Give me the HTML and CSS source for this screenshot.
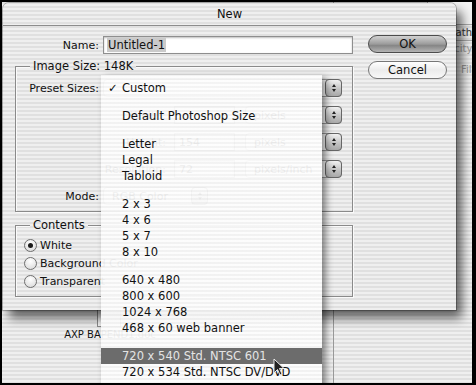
FILE: index.html
```html
<!DOCTYPE html>
<html>
<head>
<meta charset="utf-8">
<title>New</title>
<link rel="stylesheet" href="styles.css">
</head>
<body>
<div class="screen">
  <div class="docwin">
    <div class="file">
      <div class="file-icon"></div>
      <div class="file-name">AXP BAPEND1.doc</div>
    </div>
  </div>

  <div class="palette">
    <div class="pal-head"></div>
    <div class="pal-tabs"><span class="pal-tab">Paths</span></div>
    <div class="pal-row opacity">Opacity:</div>
    <div class="pal-row fill">Fill:</div>
  </div>

  <div class="dialog">
    <div class="titlebar">New</div>
    <div class="dlg-body">
      <div class="main">
        <div class="row name-row">
          <span class="lbl name-lbl">Name:</span>
          <div class="field name-field"><span class="sel">Untitled-1</span></div>
        </div>

        <div class="group size-group">
          <div class="legend">Image Size: 148K</div>
          <div class="rows">
            <div class="row">
              <span class="lbl">Preset Sizes:</span>
              <div class="popup preset"><span class="pop-text"></span><span class="stepper"></span></div>
            </div>
            <div class="row">
              <span class="lbl sub">Width:</span>
              <div class="field num"></div>
              <div class="popup units"><span class="pop-text">pixels</span><span class="stepper"></span></div>
            </div>
            <div class="row">
              <span class="lbl sub">Height:</span>
              <div class="field num">154</div>
              <div class="popup units"><span class="pop-text">pixels</span><span class="stepper"></span></div>
            </div>
            <div class="row">
              <span class="lbl sub">Resolution:</span>
              <div class="field num">72</div>
              <div class="popup units"><span class="pop-text">pixels/inch</span><span class="stepper"></span></div>
            </div>
            <div class="row">
              <span class="lbl">Mode:</span>
              <div class="popup mode"><span class="pop-text">RGB Color</span><span class="stepper"></span></div>
            </div>
          </div>
        </div>

        <div class="group contents-group">
          <div class="legend">Contents</div>
          <div class="radios">
            <div class="radio-row"><span class="radio on"></span><span>White</span></div>
            <div class="radio-row"><span class="radio"></span><span>Background Color</span></div>
            <div class="radio-row"><span class="radio"></span><span>Transparent</span></div>
          </div>
        </div>
      </div>

      <div class="buttons">
        <div class="btn ok">OK</div>
        <div class="btn">Cancel</div>
      </div>
    </div>
  </div>

  <div class="menu">
    <div class="mi"><span class="ck">✓</span>Custom</div>
    <div class="sep"></div>
    <div class="mi"><span class="ck"></span>Default Photoshop Size</div>
    <div class="sep"></div>
    <div class="mi"><span class="ck"></span>Letter</div>
    <div class="mi"><span class="ck"></span>Legal</div>
    <div class="mi"><span class="ck"></span>Tabloid</div>
    <div class="sep"></div>
    <div class="mi"><span class="ck"></span>2 x 3</div>
    <div class="mi"><span class="ck"></span>4 x 6</div>
    <div class="mi"><span class="ck"></span>5 x 7</div>
    <div class="mi"><span class="ck"></span>8 x 10</div>
    <div class="sep"></div>
    <div class="mi"><span class="ck"></span>640 x 480</div>
    <div class="mi"><span class="ck"></span>800 x 600</div>
    <div class="mi"><span class="ck"></span>1024 x 768</div>
    <div class="mi"><span class="ck"></span>468 x 60 web banner</div>
    <div class="sep"></div>
    <div class="mi hl"><span class="ck"></span>720 x 540 Std. NTSC 601</div>
    <div class="mi"><span class="ck"></span>720 x 534 Std. NTSC DV/DVD</div>
  </div>

  <svg class="cursor" width="12" height="19" viewBox="0 0 12 19">
    <path d="M1 1 L1 15 L4.5 11.5 L7 17 L9 16 L6.5 10.5 L11 10.5 Z" fill="#222" stroke="#e8e8e8" stroke-width="1"/>
  </svg>
</div>
</body>
</html>
```

FILE: styles.css
```css
* { box-sizing: border-box; }

html, body { margin: 0; padding: 0; }

body {
  background: #000;
  width: 476px;
  height: 385px;
  padding: 2px 4px 2px 2px;
  overflow: hidden;
  font-family: "DejaVu Sans", "Liberation Sans", sans-serif;
  font-size: 11px;
  color: #111;
}

.screen {
  position: relative;
  width: 470px;
  height: 381px;
  overflow: hidden;
  background: repeating-linear-gradient(#efefef 0 2px, #e0e0e0 2px 4px) fixed;
}

/* background document window */
.docwin {
  position: absolute;
  left: 0;
  top: 0;
  width: 332px;
  height: 381px;
  border-right: 1px solid #9a9a9a;
  background: repeating-linear-gradient(#efefef 0 2px, #e0e0e0 2px 4px) fixed;
  padding: 303px 0 0 62px;
}

.file {
  width: 92px;
  display: flex;
  flex-direction: column;
  align-items: center;
}

.file-icon {
  width: 24px;
  height: 22px;
  background: #f4f4f4;
  border: 1px solid #8a8a8a;
  margin-left: -2px;
}

.file-name {
  font-size: 10px;
  line-height: 14px;
  margin-top: 1px;
  white-space: nowrap;
  color: #111;
}

/* palette at right */
.palette {
  position: absolute;
  left: 425px;
  top: 0;
  width: 45px;
  height: 120px;
  background: repeating-linear-gradient(#efefef 0 2px, #e0e0e0 2px 4px) fixed;
  border-left: 1px solid #999;
  font-size: 10px;
  color: #555;
}

.pal-head {
  height: 23px;
  background: #f3f3f3;
  border-bottom: 1px solid #a8a8a8;
}

.pal-tabs {
  height: 16px;
  padding-left: 22px;
  border-bottom: 1px solid #a8a8a8;
  display: flex;
  align-items: center;
}

.pal-tab { color: #333; }

.pal-row {
  height: 14px;
  line-height: 14px;
  white-space: nowrap;
}

.pal-row.opacity { margin-top: 1px; padding-left: 6px; color: #999; }
.pal-row.fill { margin-top: 7px; padding-left: 33px; color: #999; }

/* dialog */
.dialog {
  position: absolute;
  left: 1px;
  top: 1px;
  width: 453px;
  height: 307px;
  background: repeating-linear-gradient(#efefef 0 2px, #e0e0e0 2px 4px) fixed;
  border-radius: 6px 6px 0 0;
  box-shadow: 0 0 0 1px rgba(0, 0, 0, .25), 6px 8px 11px rgba(0, 0, 0, .6);
}

.titlebar {
  height: 23px;
  line-height: 22px;
  text-align: center;
  font-size: 11.5px;
  color: #111;
  border-bottom: 1px solid #8c8c8c;
}

.dlg-body {
  display: flex;
  padding: 10px 9px 0 12px;
}

.main { width: 338px; }

.row {
  display: flex;
  align-items: center;
  height: 18px;
}

.lbl {
  width: 83px;
  margin-right: 4px;
  text-align: right;
  white-space: nowrap;
}

.name-lbl { width: 84px; }

.lbl.sub { width: 150px; margin-right: 8px; }

.field {
  height: 18px;
  background: #fff;
  border: 1px solid #8e8e8e;
  box-shadow: inset 0 1px 2px rgba(0, 0, 0, .25);
  display: flex;
  align-items: center;
}

.name-field {
  width: 250px;
  padding-left: 3px;
  font-size: 11.5px;
}

.sel {
  background: #cacaca;
  padding: 0 1px;
  line-height: 14px;
}

.field.num { width: 61px; padding-left: 4px; }

.group {
  border: 1px solid #8a8a8a;
  box-shadow: inset 1px 1px 0 #fafafa, 1px 1px 0 #fafafa;
}

.size-group { margin-top: 12px; }
.contents-group { margin-top: 13px; }

.legend {
  width: fit-content;
  height: 15px;
  line-height: 15px;
  margin: -8px 0 0 14px;
  padding: 0 3px;
  font-size: 11.5px;
  background: repeating-linear-gradient(#efefef 0 2px, #e0e0e0 2px 4px) fixed;
}

.rows {
  display: flex;
  flex-direction: column;
  gap: 9px;
  padding: 5px 0 6px 0;
}

.popup {
  height: 18px;
  display: flex;
  align-items: stretch;
  background: #fff;
  border: 1px solid #9a9a9a;
  border-radius: 4px;
}

.popup .pop-text {
  flex: 1;
  padding-left: 8px;
  display: flex;
  align-items: center;
  white-space: nowrap;
}

.preset { width: 239px; }
.units { width: 97px; margin-left: 10px; }
.mode { width: 105px; }

.stepper {
  width: 17px;
  margin: -1px -1px -1px 0;
  border: 1px solid #666;
  border-radius: 4px;
  background: linear-gradient(#f2f2f2, #c4c4c4 55%, #a9a9a9);
  display: flex;
  flex-direction: column;
  align-items: center;
  justify-content: center;
  gap: 2px;
}

.stepper::before,
.stepper::after {
  content: "";
  width: 0;
  height: 0;
  border-left: 2.5px solid transparent;
  border-right: 2.5px solid transparent;
}

.stepper::before { border-bottom: 3px solid #222; }
.stepper::after { border-top: 3px solid #222; }

.radios {
  display: flex;
  flex-direction: column;
  gap: 2px;
  padding: 4px 0 7px 8px;
}

.radio-row {
  height: 16px;
  display: flex;
  align-items: center;
  gap: 3px;
  white-space: nowrap;
}

.radio {
  width: 13px;
  height: 13px;
  border-radius: 50%;
  border: 1px solid #6f6f6f;
  background: radial-gradient(circle at 50% 30%, #fff, #d6d6d6);
  display: flex;
  align-items: center;
  justify-content: center;
}

.radio.on::after {
  content: "";
  width: 5px;
  height: 5px;
  border-radius: 50%;
  background: #1a1a1a;
}

.buttons {
  width: 80px;
  margin-left: 15px;
  margin-top: -1px;
  display: flex;
  flex-direction: column;
  gap: 8px;
}

.btn {
  height: 18px;
  border-radius: 9px;
  border: 1px solid #777;
  background: linear-gradient(#ffffff, #ececec 50%, #f8f8f8);
  font-size: 11.5px;
  display: flex;
  align-items: center;
  justify-content: center;
  color: #111;
}

.btn.ok {
  border-color: #4c4c4c;
  background: linear-gradient(#d2d2d2, #9c9c9c 50%, #868686 60%, #b4b4b4);
}

/* popup menu */
.menu {
  position: absolute;
  left: 99px;
  top: 73px;
  width: 221px;
  height: 320px;
  padding-top: 5px;
  background: repeating-linear-gradient(rgba(253, 253, 253, .94) 0 2px, rgba(243, 243, 243, .94) 2px 4px) fixed;
  box-shadow: 4px 3px 7px rgba(0, 0, 0, .45);
  font-size: 11.5px;
  color: #111;
}

.mi {
  height: 16px;
  display: flex;
  align-items: center;
  padding-left: 7px;
  white-space: nowrap;
}

.mi .ck { width: 14px; }

.mi.hl {
  background: #6c6c6c;
  color: #e4e4e4;
}

.sep { height: 12px; }

.cursor {
  position: absolute;
  left: 271px;
  top: 356px;
}
```
